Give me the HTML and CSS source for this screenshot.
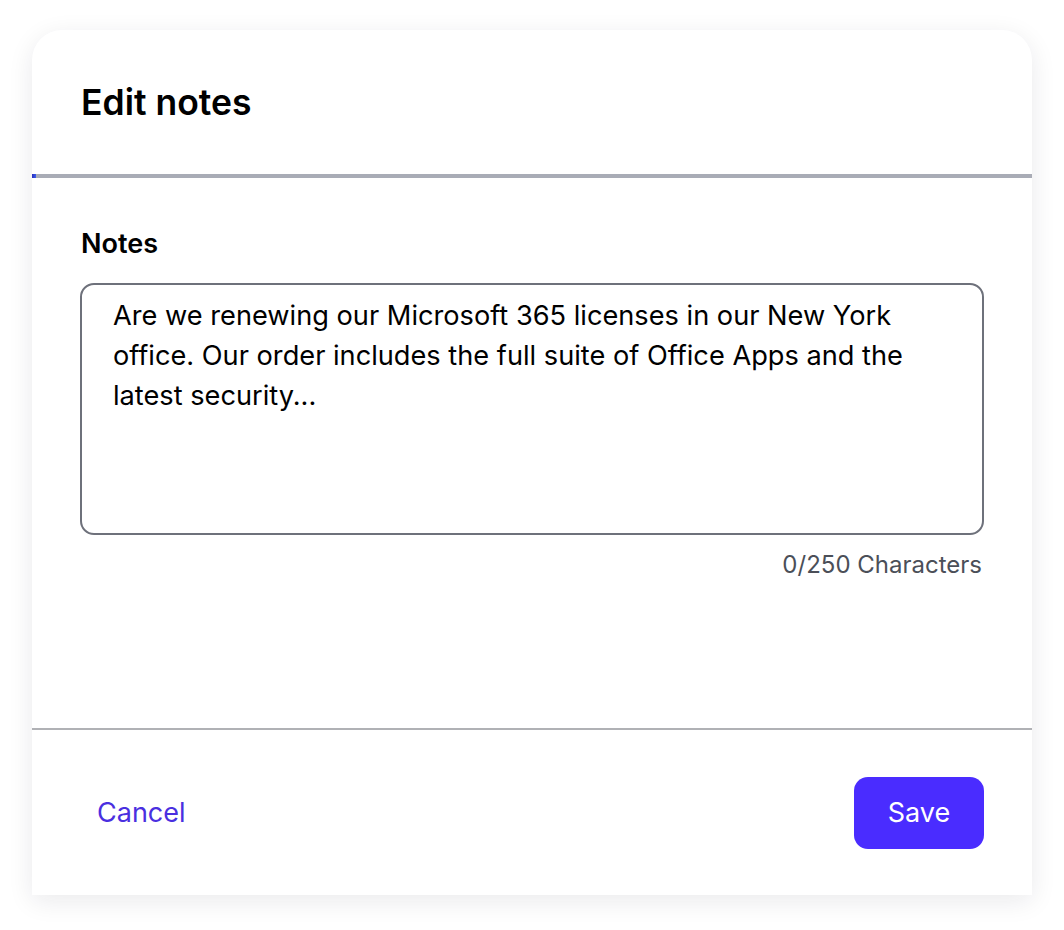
FILE: index.html
```html
<!DOCTYPE html>
<html lang="en">
<head>
    <meta charset="UTF-8">
    <meta name="viewport" content="width=device-width, initial-scale=1.0">
    <title>Edit notes</title>
    <link rel="stylesheet" href="styles.css">
</head>
<body>
    <div class="modal">
        <div class="modal-header">
            <h1>Edit notes</h1>
        </div>
        <div class="progress"><span class="progress-fill"></span></div>

        <div class="modal-body">
            <label for="notes">Notes</label>
            <textarea id="notes">Are we renewing our Microsoft 365 licenses in our New York office. Our order includes the full suite of Office Apps and the latest security...</textarea>
            <div class="counter">0/250 Characters</div>
        </div>

        <div class="modal-footer">
            <button class="btn-link">Cancel</button>
            <button class="btn-primary">Save</button>
        </div>
    </div>
</body>
</html>
```

FILE: styles.css
```css
/* base */
body {
    font-family: Inter, "Liberation Sans", sans-serif;
    margin: 0;
    padding: 0;
    background-color: #ffffff;
    color: #000000;
}

.modal {
    width: 1000px;
    height: 865px;
    margin: 30px 32px;
    background-color: #ffffff;
    border-radius: 30px 30px 0 0;
    box-shadow: 0 6px 26px rgba(20, 20, 40, 0.09);
    display: flex;
    flex-direction: column;
}

/* header */
.modal-header {
    height: 144px;
    padding: 0 49px;
    display: flex;
    align-items: center;
}
.modal-header h1 {
    margin: 0;
    font-size: 35.5px;
    font-weight: 600;
}
.progress {
    height: 4px;
    background-color: #a9acb6;
    display: flex;
}
.progress-fill {
    width: 4px;
    background: linear-gradient(to right, #2a2fb8, #3a5cf0);
}

/* body */
.modal-body {
    height: 550px;
    padding: 50px 48px 0 48px;
    box-sizing: border-box;
    display: flex;
    flex-direction: column;
}
label {
    display: block;
    font-size: 27px;
    font-weight: 600;
    line-height: 32px;
    margin-bottom: 23px;
    padding-left: 1px;
}
textarea {
    height: 252px;
    box-sizing: border-box;
    padding: 11px 36px 0 31px;
    border: 2px solid #6e717b;
    border-radius: 14px;
    font-family: inherit;
    font-size: 27.2px;
    line-height: 40px;
    color: #000000;
    resize: none;
    outline: none;
    overflow: hidden;
}
.counter {
    margin-top: 14px;
    padding-right: 2px;
    text-align: right;
    font-size: 24px;
    line-height: 32px;
    color: #4b4f58;
}

/* footer */
.modal-footer {
    flex: 1;
    border-top: 2px solid #b0b1b5;
    padding: 0 48px 0 49px;
    display: flex;
    align-items: center;
    justify-content: space-between;
}
button {
    font-family: inherit;
    font-size: 27px;
    border: none;
    cursor: pointer;
}
.btn-link {
    background: none;
    color: #4a2fe0;
    padding: 0 16px;
}
.btn-primary {
    width: 130px;
    height: 72px;
    background-color: #4a2cff;
    color: #ffffff;
    border-radius: 14px;
}
```
